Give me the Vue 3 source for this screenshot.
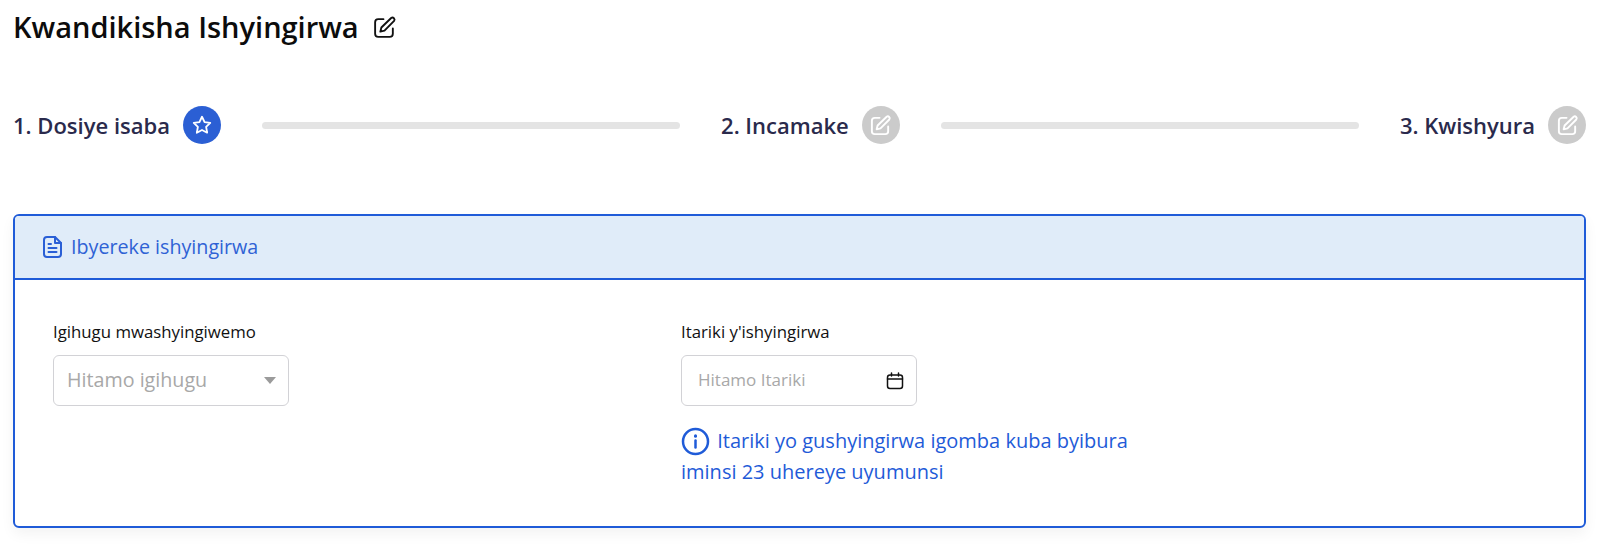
<script setup>
const steps = [
  { label: '1. Dosiye isaba', active: true },
  { label: '2. Incamake', active: false },
  { label: '3. Kwishyura', active: false }
]
</script>

<template>
  <div class="page">
    <div class="title-row">
      <h1 class="title">Kwandikisha Ishyingirwa</h1>
      <svg class="title-icon" width="25" height="25" viewBox="0 0 24 24" fill="none" stroke="#111" stroke-width="1.8" stroke-linecap="round" stroke-linejoin="round">
        <path d="M11 4H6a3 3 0 0 0-3 3v11a3 3 0 0 0 3 3h11a3 3 0 0 0 3-3v-5" />
        <path d="M18.4 2.9a2 2 0 0 1 2.8 2.8L12 15l-4 1 1-4z" />
      </svg>
    </div>

    <div class="steps">
      <template v-for="(step, i) in steps" :key="step.label">
        <div class="step">
          <span class="step-label">{{ step.label }}</span>
          <span class="step-badge" :class="{ active: step.active }">
            <svg v-if="step.active" width="22" height="22" viewBox="0 0 24 24" fill="none" stroke="#fff" stroke-width="2" stroke-linejoin="round">
              <path d="M12 3l2.8 5.8 6.2.9-4.5 4.4 1.1 6.3L12 17.4l-5.6 3 1.1-6.3L3 9.7l6.2-.9z" />
            </svg>
            <svg v-else width="23" height="23" viewBox="0 0 24 24" fill="none" stroke="#fff" stroke-width="2" stroke-linecap="round" stroke-linejoin="round">
              <path d="M11 4H6a3 3 0 0 0-3 3v11a3 3 0 0 0 3 3h11a3 3 0 0 0 3-3v-5" />
              <path d="M18.4 2.9a2 2 0 0 1 2.8 2.8L12 15l-4 1 1-4z" />
            </svg>
          </span>
        </div>
        <div v-if="i < steps.length - 1" class="step-line"></div>
      </template>
    </div>

    <section class="card">
      <header class="card-head">
        <svg width="22" height="24" viewBox="0 0 22 24" fill="none" stroke="#2a5fd6" stroke-width="2" stroke-linecap="round" stroke-linejoin="round">
          <path d="M13 2H5a3 3 0 0 0-3 3v14a3 3 0 0 0 3 3h11a3 3 0 0 0 3-3V8z" />
          <path d="M13 2v6h6" />
          <path d="M6.5 9H9M6.5 13h8M6.5 17h8" />
        </svg>
        <span class="head-text">Ibyereke ishyingirwa</span>
      </header>
      <div class="card-body">
        <div class="col col-left">
          <label class="field-label">Igihugu mwashyingiwemo</label>
          <div class="select">
            <span class="value">Hitamo igihugu</span>
            <span class="caret"></span>
          </div>
        </div>
        <div class="col">
          <label class="field-label">Itariki y'ishyingirwa</label>
          <div class="date">
            <span class="value">Hitamo Itariki</span>
            <svg width="18" height="18" viewBox="0 0 18 18" fill="none" stroke="#111" stroke-width="1.5" stroke-linecap="round">
              <rect x="1.5" y="3" width="15" height="13.5" rx="2.5" />
              <path d="M1.5 7h15M5.5 1v3M12.5 1v3" />
            </svg>
          </div>
          <p class="note">
            <svg class="note-icon" width="29" height="29" viewBox="0 0 29 29" fill="none" stroke="#1f5bd8" stroke-linecap="round">
              <circle cx="14.5" cy="14.5" r="12.5" stroke-width="2.5" />
              <path d="M14.5 13.5v7" stroke-width="2.5" />
              <path d="M14.5 8.8v.4" stroke-width="3" />
            </svg>
            Itariki yo gushyingirwa igomba kuba byibura<br />iminsi 23 uhereye uyumunsi
          </p>
        </div>
      </div>
    </section>
  </div>
</template>

<style>
body { background: #fff; }
</style>

<style scoped>
.page {
  width: 1600px; height: 546px; box-sizing: border-box; overflow: hidden;
  padding: 0 14px 0 13px; background: #fff;
  font-family: "Open Sans", "Noto Sans", sans-serif;
}
.title-row { display: flex; align-items: center; gap: 13px; height: 56px; }
.title { margin: -3px 0 0; font-size: 29px; font-weight: 600; color: #0c0c0c; line-height: 1; }
.title-icon { margin-top: -1px; }

.steps { display: flex; align-items: center; margin-top: 49px; height: 40px; }
.step { display: flex; align-items: center; gap: 13px; }
.step-label { font-size: 22px; font-weight: 600; color: #2a2a4c; white-space: nowrap; }
.step-badge {
  width: 38px; height: 38px; border-radius: 50%; background: #cbcbcb;
  display: flex; align-items: center; justify-content: center;
}
.step-badge.active { background: #2b5fd4; }
.step-line { flex: 1; height: 7px; border-radius: 4px; background: #e4e4e4; margin: 0 41px; }

.card {
  margin-top: 69px; height: 314px; box-sizing: border-box;
  border: 2px solid #1f5bd8; border-radius: 6px; overflow: hidden;
  box-shadow: 0 6px 14px rgba(0, 0, 0, .05);
}
.card-head {
  height: 64px; box-sizing: border-box; background: #e0ecf9; border-bottom: 2px solid #1f5bd8;
  display: flex; align-items: center; gap: 7px; padding-left: 27px;
  font-size: 19.7px; color: #2f62d5;
}
.head-text { margin-top: -1px; }
.card-body { display: flex; padding: 42px 38px 0; }
.col { display: flex; flex-direction: column; align-items: flex-start; }
.col-left { width: 628px; }
.field-label { font-size: 16.8px; color: #111; line-height: 20px; }
.select, .date {
  margin-top: 13px; width: 236px; height: 51px; box-sizing: border-box;
  border: 1.5px solid #d2d2d6; border-radius: 6px;
  display: flex; align-items: center; justify-content: space-between;
}
.value { margin-top: -2px; }
.select { padding: 0 12px 0 13px; font-size: 19.7px; color: #a8a8a8; }
.caret { width: 0; height: 0; border-left: 6.5px solid transparent; border-right: 6.5px solid transparent; border-top: 7px solid #9b9b9b; }
.date { padding: 0 12px 0 16px; font-size: 17px; color: #a8a8a8; }
.note { margin: 19px 0 0; font-size: 20px; line-height: 31px; color: #1f5bd8; width: 470px; }
.note-icon { vertical-align: -8px; margin-right: 2px; }
</style>
